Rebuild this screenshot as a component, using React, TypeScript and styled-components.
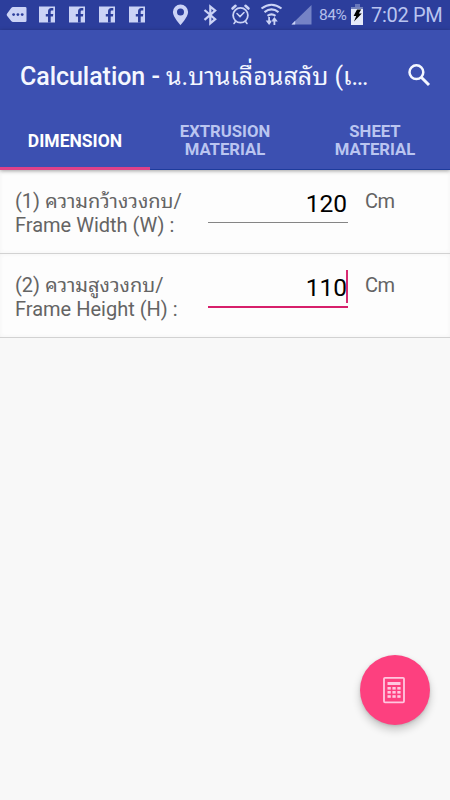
import React from "react";
import styled, { createGlobalStyle } from "styled-components";

const GlobalStyle = createGlobalStyle`
  * { box-sizing: border-box; }
  body { margin: 0; background: #f8f8f8; font-family: Roboto, "Noto Sans Thai Looped", "Droid Sans Thai", Loma, Waree, Garuda, "Noto Sans", sans-serif; }
`;

const Screen = styled.div`
  width: 450px;
  height: 800px;
  display: flex;
  flex-direction: column;
  background: #f8f8f8;
  overflow: hidden;
  position: relative;
`;

const StatusBar = styled.div`
  height: 30px;
  flex: none;
  display: flex;
  align-items: center;
  background: #2c3e9c;
  color: #cbd3f6;
  padding-left: 1px;
`;

const IconGroup = styled.div<{ $gap?: number }>`
  display: flex;
  margin-left: ${(p) => p.$gap ?? 0}px;
  svg { display: block; width: 30px; height: 30px; flex: none; }
`;

const Percent = styled.span`
  width: 28px;
  margin-left: 4px;
  font-size: 15.5px;
  letter-spacing: -0.5px;
  color: #b4bfeb;
  white-space: nowrap;
  line-height: 31px;
`;

const Battery = styled.svg`
  width: 14px;
  height: 30px;
  margin-left: 3px;
  flex: none;
`;

const Clock = styled.span`
  margin-left: 7px;
  font-size: 20px;
  line-height: 32px;
  font-weight: 400;
  letter-spacing: -0.3px;
  color: #b9c4f0;
  white-space: nowrap;
`;

const Header = styled.header`
  height: 140px;
  flex: none;
  display: flex;
  flex-direction: column;
  background: #3c50b1;
  box-shadow: 0 1px 4px rgba(0, 0, 0, 0.35);
  z-index: 1;
`;

const Toolbar = styled.div`
  height: 82px;
  display: flex;
  align-items: center;
  padding: 11px 15px 0 20px;
`;

const Title = styled.h1`
  margin: 0;
  width: 384px;
  font-size: 25px;
  line-height: 40px;
  font-weight: 500;
  letter-spacing: -0.05px;
  color: #f4f7ff;
  white-space: nowrap;
`;

const ThaiTitle = styled.span`
  font-size: 25px;
  font-weight: 400;
  letter-spacing: 0;
`;

const Dots = styled.span`
  letter-spacing: -1.3px;
`;

const SearchIcon = styled.svg`
  width: 30px;
  height: 30px;
  flex: none;
`;

const Tabs = styled.nav`
  height: 58px;
  display: grid;
  grid-template-columns: repeat(3, 1fr);
`;

const Tab = styled.div<{ $active?: boolean }>`
  display: flex;
  align-items: center;
  justify-content: center;
  text-align: center;
  white-space: pre-line;
  font-size: ${(p) => (p.$active ? 17.5 : 16.7)}px;
  line-height: 18px;
  font-weight: 700;
  color: ${(p) => (p.$active ? "#ffffff" : "#bac5f0")};
  border-bottom: ${(p) => (p.$active ? "3px solid #df4189" : "1px solid #1e3b9c")};
  padding-top: ${(p) => (p.$active ? 3 : 1)}px;
`;

const Row = styled.section`
  height: 84px;
  flex: none;
  display: flex;
  align-items: flex-start;
  padding: 19px 0 0 15px;
  background: #fdfdfd;
  border-bottom: 1px solid #d2d2d2;
  box-shadow: inset 0 0 4px #f3f3f3;
`;

const Label = styled.label`
  width: 193px;
  font-size: 20px;
  line-height: 24px;
  color: #646464;
  white-space: nowrap;
`;

const Line = styled.span`
  display: block;
  height: 24px;
`;

const Field = styled.div<{ $focused?: boolean }>`
  width: 140px;
  height: ${(p) => (p.$focused ? 35 : 34)}px;
  border-bottom: ${(p) => (p.$focused ? "2px solid #d71f6b" : "1px solid #858585")};
  display: flex;
  justify-content: flex-end;
  font-size: 24.5px;
  line-height: 29px;
  color: #000;
`;

const Value = styled.span<{ $focused?: boolean }>`
  margin-right: ${(p) => (p.$focused ? -1 : 1)}px;
`;

const Caret = styled.span`
  width: 2px;
  height: 33px;
  margin-top: -3px;
  background: #d72b72;
`;

const Unit = styled.span`
  margin-left: 17px;
  font-size: 20px;
  line-height: 24px;
  letter-spacing: -0.5px;
  color: #646464;
`;

const Fab = styled.button`
  position: absolute;
  right: 20px;
  bottom: 75px;
  width: 70px;
  height: 70px;
  padding: 0 2px 0 0;
  border: 0;
  border-radius: 50%;
  background: #fd407f;
  box-shadow: 0 5px 9px rgba(0, 0, 0, 0.2), 0 1px 3px rgba(0, 0, 0, 0.12);
  display: flex;
  align-items: center;
  justify-content: center;
  svg { width: 24px; height: 28px; }
`;

const FacebookGlyph = () => (
  <svg viewBox="0 0 30 30">
    <path fill="#cbd3f6" d="M8 6.5h16v16H8z" />
    <path fill="#2c3e9c" d="M17 22.5v-6h-2.2v-2.6H17v-2.2c0-2.3 1.3-3.6 3.4-3.6h1.9v2.4h-1.2c-1 0-1.4.5-1.4 1.4v2h2.6l-.4 2.6h-2.2v6z" />
  </svg>
);

const StatusIcons = () => (
  <>
    <IconGroup>
      <svg viewBox="0 0 30 30">
        <path fill="#cbd3f6" d="M12 7h12.2q1.3 0 1.3 1.3v12.4q0 1.3-1.3 1.3H12q-1 0-1.8-1L6 15.8q-.7-1 0-2L10.2 8q.8-1 1.8-1z" />
        <g fill="#2c3e9c"><circle cx="12.6" cy="14.6" r="1.4" /><circle cx="16.9" cy="14.6" r="1.4" /><circle cx="21.2" cy="14.6" r="1.4" /></g>
      </svg>
      {[1, 2, 3, 4].map((n) => <FacebookGlyph key={n} />)}
    </IconGroup>
    <IconGroup $gap={14}>
      <svg viewBox="0 0 30 30">
        <path fill="#cbd3f6" fillRule="evenodd" d="M15.5 4.5a7.6 7.6 0 0 0-7.6 7.6c0 5 7.6 13.2 7.6 13.2s7.6-8.2 7.6-13.2a7.6 7.6 0 0 0-7.6-7.6zm0 4.1a3.5 3.5 0 1 1 0 7 3.5 3.5 0 0 1 0-7z" />
      </svg>
      <svg viewBox="0 0 30 30">
        <path fill="none" stroke="#cbd3f6" strokeWidth="2.2" d="M9.5 10l10.7 9.2-4.9 4.1V6.5l4.9 4.1L9.5 19.8" />
      </svg>
      <svg viewBox="0 0 30 30" fill="none" stroke="#cbd3f6" strokeLinecap="round">
        <circle cx="15.5" cy="15.3" r="7.4" strokeWidth="1.8" />
        <path strokeWidth="2.6" d="M7.5 8.5l3-2.7M23.5 8.5l-3-2.7" />
        <path strokeWidth="1.6" d="M12 13.5l3 3 4-4M10.5 21.5L9 23.5M20.5 21.5l1.5 2" />
      </svg>
      <svg viewBox="0 0 30 30" fill="none" stroke="#cbd3f6" strokeWidth="2.1">
        <path d="M6.5 8.5q10-7.5 20 0M9.5 12.2q7-5.5 14 0M12.5 15.8q4-3 8 0" />
        <path strokeWidth="1.8" d="M14.1 17v5M19.4 25v-5" />
        <path fill="#cbd3f6" stroke="none" d="M10.7 20.6h6.8l-3.4 4.4zM16 21.4h6.8l-3.4-4.4z" />
      </svg>
      <svg viewBox="0 0 30 30">
        <path fill="#7583c6" d="M26.5 5v19.5h-20z" />
        <path fill="#cbd3f6" d="M10.2 20.8v3.7H6.5z" />
      </svg>
    </IconGroup>
  </>
);

const rows = [
  { thai: "(1) ความกว้างวงกบ/", english: "Frame Width (W) :", value: "120", focused: false },
  { thai: "(2) ความสูงวงกบ/", english: "Frame Height (H) :", value: "110", focused: true },
];

export default function App() {
  return (
    <Screen>
      <GlobalStyle />
      <StatusBar>
        <StatusIcons />
        <Percent>84%</Percent>
        <Battery viewBox="0 0 14 30">
          <path fill="#6876ba" d="M5 4h5v3H5z" />
          <path fill="#7583bd" d="M1 7h12v3H1z" />
          <path fill="#e6eafa" d="M1 9h12v16H1z" />
          <path fill="#000" d="M7 9.5h4.2L8.8 13.6h3L4 21.5l2.2-5.6H3.6z" />
        </Battery>
        <Clock>7:02 PM</Clock>
      </StatusBar>
      <Header>
        <Toolbar>
          <Title>Calculation - <ThaiTitle>น.บานเลื่อนสลับ (เ<Dots>...</Dots></ThaiTitle></Title>
          <SearchIcon viewBox="0 0 30 30" fill="none" stroke="#f4f7ff">
            <circle cx="12.4" cy="10.2" r="6.9" strokeWidth="2.5" />
            <path strokeWidth="3" d="M17 15l8 8" />
          </SearchIcon>
        </Toolbar>
        <Tabs>
          <Tab $active>DIMENSION</Tab>
          <Tab>{"EXTRUSION\nMATERIAL"}</Tab>
          <Tab>{"SHEET\nMATERIAL"}</Tab>
        </Tabs>
      </Header>
      {rows.map((row) => (
        <Row key={row.value}>
          <Label><Line>{row.thai}</Line><Line>{row.english}</Line></Label>
          <Field $focused={row.focused}>
            <Value $focused={row.focused}>{row.value}</Value>
            {row.focused && <Caret />}
          </Field>
          <Unit>Cm</Unit>
        </Row>
      ))}
      <Fab aria-label="Calculate">
        <svg viewBox="0 0 24 28">
          <rect x="2" y="1.8" width="20" height="24.5" rx="1" fill="none" stroke="#ffc7e0" strokeWidth="1.8" />
          <g fill="#ffc7e0">
            <path d="M5.5 6h13v3h-13z" />
            {[11, 15, 19.2].map((y) => [5.5, 10.4, 15.3].map((x) => <rect key={`${x}-${y}`} x={x} y={y} width="3.3" height="2.6" />))}
          </g>
        </svg>
      </Fab>
    </Screen>
  );
}
